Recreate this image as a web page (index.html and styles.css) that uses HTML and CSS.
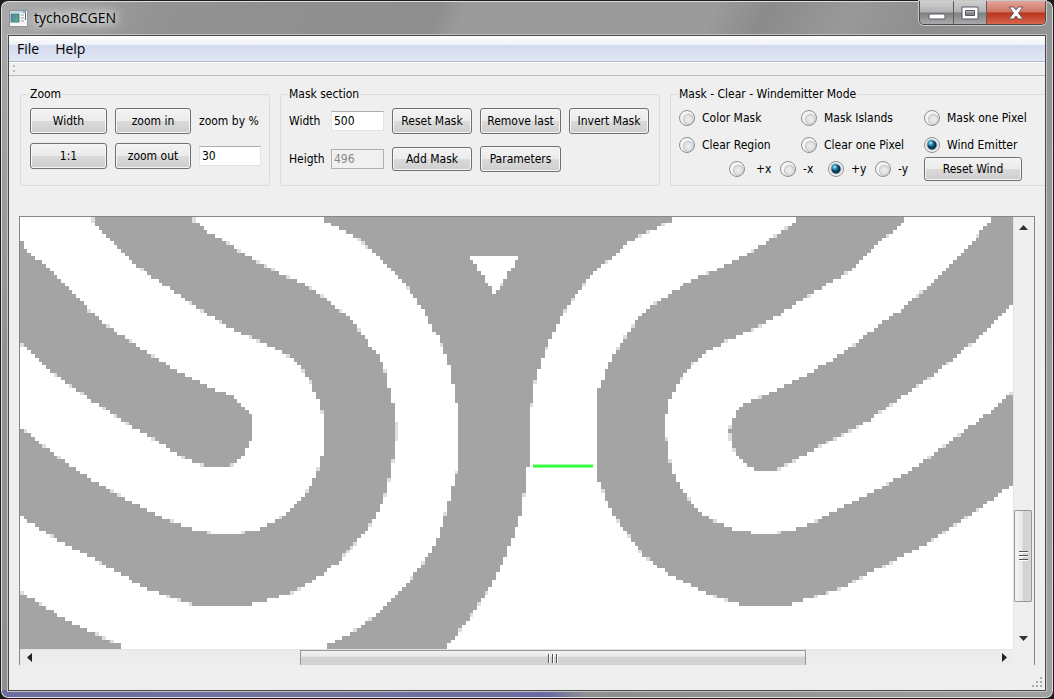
FILE: index.html
```html
<!DOCTYPE html>
<html lang="en">
<head>
<meta charset="utf-8">
<title>tychoBCGEN</title>
<link rel="stylesheet" href="styles.css">
</head>
<body>
<div class="window">
  <header class="titlebar">
    <svg class="app-icon" width="19" height="17" viewBox="0 0 19 17" aria-hidden="true">
      <defs><linearGradient id="scr" x1="0" y1="0" x2="1" y2="1"><stop offset="0" stop-color="#4f7fa6"/><stop offset="1" stop-color="#5fb37e"/></linearGradient></defs>
      <rect x="0.5" y="0.5" width="18" height="16" fill="#f6f8f8" stroke="#8b9696"/>
      <rect x="1" y="1" width="13" height="2" fill="#c6d6e2"/>
      <rect x="2" y="4" width="8" height="8" fill="url(#scr)" stroke="#4b7f87" stroke-width="1"/>
      <path d="M12 5h3M12 8h3M12 11h3" stroke="#c4caca" stroke-width="2"/>
      <path d="M16.500 2v8" stroke="#52666b"/>
      <rect x="14" y="1" width="3" height="2" fill="#87a8bd"/>
    </svg>
    <h1 class="title">tychoBCGEN</h1>
    <div class="controls">
      <button class="control minimize" type="button" aria-label="Minimize"><svg width="18" height="7" viewBox="0 0 18 7"><rect x="1" y="1" width="16" height="5" rx="1" fill="#fff" stroke="#555a66"/></svg></button>
      <button class="control maximize" type="button" aria-label="Maximize"><svg width="18" height="14" viewBox="0 0 18 14"><path d="M1 1h16v12H1zM4.500 4.500v5h9v-5z" fill="#fff" fill-rule="evenodd" stroke="#555a66"/></svg></button>
      <button class="control close" type="button" aria-label="Close"><svg width="16" height="14" viewBox="0 0 16 14"><path d="M1 1h4.500L8 4l2.500-3H15l-4.500 6 4.500 6h-4.500L8 10l-2.500 3H1l4.500-6z" fill="#fff" stroke="#6b5557"/></svg></button>
    </div>
  </header>
  <main class="client">
    <nav class="menubar">
      <button class="menu" type="button">File</button>
      <button class="menu" type="button">Help</button>
    </nav>
    <div class="toolbar"><svg width="3" height="8" viewBox="0 0 3 8" aria-hidden="true"><path d="M0 1h2M0 6h2" stroke="#bbb" stroke-width="2"/></svg></div>
    <form class="panels">
      <fieldset class="group zoom">
        <legend>Zoom</legend>
        <div class="zoom-grid">
          <button class="btn" type="button">Width</button>
          <button class="btn" type="button">zoom in</button>
          <label class="nowrap" for="zoomby">zoom by %</label>
          <button class="btn" type="button">1:1</button>
          <button class="btn" type="button">zoom out</button>
          <input class="field" id="zoomby" type="text" value="30">
        </div>
      </fieldset>
      <fieldset class="group mask">
        <legend>Mask section</legend>
        <div class="mask-grid">
          <label for="mw">Width</label>
          <input class="field" id="mw" type="text" value="500">
          <button class="btn" type="button">Reset Mask</button>
          <button class="btn" type="button">Remove last</button>
          <button class="btn" type="button">Invert Mask</button>
          <label for="mh">Heigth</label>
          <input class="field" id="mh" type="text" value="496" disabled>
          <button class="btn low" type="button">Add Mask</button>
          <button class="btn" type="button">Parameters</button>
        </div>
      </fieldset>
      <fieldset class="group mode">
        <legend>Mask - Clear - Windemitter Mode</legend>
        <div class="mode-grid">
          <label class="choice"><input type="radio" name="mode">Color Mask</label>
          <label class="choice"><input type="radio" name="mode">Mask Islands</label>
          <label class="choice"><input type="radio" name="mode">Mask one Pixel</label>
          <label class="choice"><input type="radio" name="mode">Clear Region</label>
          <label class="choice"><input type="radio" name="mode">Clear one Pixel</label>
          <label class="choice"><input type="radio" name="mode" checked>Wind Emitter</label>
          <div class="directions">
            <label class="choice wide"><input type="radio" name="dir">+x</label>
            <label class="choice"><input type="radio" name="dir">-x</label>
            <label class="choice"><input type="radio" name="dir" checked>+y</label>
            <label class="choice"><input type="radio" name="dir">-y</label>
          </div>
          <button class="btn low" type="button">Reset Wind</button>
        </div>
      </fieldset>
    </form>
    <section class="view">
      <div class="picture">
        <canvas class="mask-image" id="mask" width="265" height="116"></canvas>
        <svg class="overlay" viewBox="20 217 993 431" preserveAspectRatio="none" aria-hidden="true"><rect x="533" y="464" width="60" height="3" fill="#33ff40"/></svg>
      </div>
      <div class="vbar">
        <button class="arrow" type="button" aria-label="Scroll up"><svg width="9" height="5" viewBox="0 0 9 5"><path d="M0 5 4.500 0 9 5z" fill="#333"/></svg></button>
        <span class="gap before"></span>
        <span class="thumb"><svg width="9" height="10" viewBox="0 0 9 10"><path d="M0 .5h9M0 4.500h9M0 8.500h9" stroke="#555"/><path d="M0 1.500h9M0 5.500h9M0 9.500h9" stroke="#fff"/></svg></span>
        <span class="gap after"></span>
        <button class="arrow" type="button" aria-label="Scroll down"><svg width="9" height="5" viewBox="0 0 9 5"><path d="M0 0h9L4.500 5z" fill="#333"/></svg></button>
      </div>
      <div class="hbar">
        <button class="arrow" type="button" aria-label="Scroll left"><svg width="5" height="9" viewBox="0 0 5 9"><path d="M5 0v9L0 4.500z" fill="#222"/></svg></button>
        <span class="gap before"></span>
        <span class="thumb"><svg width="11" height="9" viewBox="0 0 11 9"><path d="M.5 0v9M4.500 0v9M8.500 0v9" stroke="#555"/><path d="M1.500 0v9M5.500 0v9M9.500 0v9" stroke="#fff"/></svg></span>
        <span class="gap after"></span>
        <button class="arrow" type="button" aria-label="Scroll right"><svg width="5" height="9" viewBox="0 0 5 9"><path d="M0 0v9L5 4.500z" fill="#222"/></svg></button>
      </div>
    </section>
    <footer class="status"><svg width="11" height="11" viewBox="0 0 11 11" aria-hidden="true"><path d="M8 1h2M8 5h2M4 5h2M0 9h2M4 9h2M8 9h2" stroke="#aaa" stroke-width="2"/></svg></footer>
  </main>
</div>
<script src="mask.js"></script>
</body>
</html>
```

FILE: styles.css
```css
* { box-sizing: border-box; }

body {
  margin: 0;
  background: #1c1c1c;
  color: #000;
  font: 12px/16px "DejaVu Sans Condensed", "Noto Sans", sans-serif;
}

button, input { font: inherit; color: inherit; }

.window {
  display: flex;
  flex-direction: column;
  height: 100vh;
  padding: 0 7px 7px;
  border: 1px solid #1c1c1c;
  border-radius: 8px;
  box-shadow: inset 0 0 0 1px #dedede;
  background:
    linear-gradient(90deg, #6c6ca0, #73739c 30%, #6a6aa0 52%, transparent 56%) bottom / 100% 8px no-repeat,
    linear-gradient(115deg, #aaa 0, #929292 12%, #8e8e8e 32%, #9b9b9b 34%, #9b9b9b 52%, #8b8b8b 56%, #999 62%, #8e8e8e 68%, #a0a0a0 100%);
}

.titlebar {
  display: flex;
  align-items: center;
  height: 34px;
  padding-left: 1px;
}

.title {
  flex: 1;
  margin: 0 0 0 6px;
  font: 14px/20px "Open Sans", sans-serif;
  text-shadow: 0 0 8px #fff, 0 0 12px #fff, 0 0 16px #ddd;
}

.controls {
  display: flex;
  align-self: flex-start;
  border: 1px solid #4a4a4a;
  border-top: 0;
  border-radius: 0 0 5px 5px;
  overflow: hidden;
  box-shadow: 0 0 0 1px #c8c8c8;
}

.control {
  display: grid;
  place-items: center;
  width: 34px;
  height: 23px;
  padding: 0;
  border: 0;
  border-right: 1px solid #5c5c5c;
  background: linear-gradient(#d0d0d0, #b2b2b2 48%, #7f7f7f 52%, #aaa);
}

.minimize { padding-top: 8px; }
.maximize { width: 33px; }

.close {
  width: 58px;
  border: 0;
  background: linear-gradient(#e3a397, #d07565 48%, #b8331c 52%, #d8664c);
}

.client {
  display: flex;
  flex: 1;
  flex-direction: column;
  min-height: 0;
  border: 1px solid #484848;
  background: #efefef;
  box-shadow: 0 0 0 1px #c4c4c4;
}

.menubar {
  display: flex;
  gap: 16px;
  height: 26px;
  padding-left: 8px;
  border-bottom: 1px solid #b4b8cc;
  background: linear-gradient(#fff, #eef2f8 34%, #d3daed 38%, #e2e7f6);
}

.menu {
  padding: 0;
  border: 0;
  background: none;
  font: 14px/24px "Open Sans", sans-serif;
}

.toolbar {
  display: flex;
  align-items: center;
  height: 14px;
  padding-left: 4px;
  border-top: 1px solid #fff;
  border-bottom: 1px solid #b9b9b9;
}

.panels {
  display: flex;
  gap: 10px;
  padding: 10px 0 0 11px;
}

.group {
  flex: none;
  height: 100px;
  min-width: 0;
  margin: 0;
  padding: 6px 9px 0;
  border: 1px solid #dcdcdc;
  border-radius: 3px;
}

.group legend { padding: 0 1px; margin-left: -1px; }
.zoom { width: 250px; }
.mask { width: 380px; padding-left: 8px; }

.mode {
  flex: 1;
  padding: 8px 0 0 8px;
  border-right: 0;
  border-radius: 3px 0 0 3px;
}

.zoom-grid {
  display: grid;
  grid-template-columns: 77px 76px 62px;
  gap: 9px 8px;
  align-items: center;
}

.mask-grid {
  display: grid;
  grid-template-columns: 34px 53px 80px 81px 80px;
  grid-auto-rows: 26px;
  gap: 12px 8px;
  align-items: center;
}

.nowrap { white-space: nowrap; }

.btn {
  height: 26px;
  padding: 0;
  border: 1px solid #707070;
  border-radius: 3px;
  background: linear-gradient(#f3f3f3, #ebebeb 48%, #dadada 52%, #cecece);
  box-shadow: inset 0 0 0 1px #f6f6f6;
  white-space: nowrap;
}

.low { height: 24px; }

.field {
  width: 100%;
  height: 20px;
  padding: 0 2px;
  border: 1px solid #e1e3e8;
  border-top-color: #abadb3;
  background: #fff;
}

.field:disabled {
  border-color: #b0b0b0;
  background: #f0f0f0;
  color: #888;
}

.mode-grid {
  display: grid;
  grid-template-columns: 122px 123px 98px;
  grid-template-rows: 16px 16px 24px;
  row-gap: 11px;
}

.directions {
  display: grid;
  grid-column: span 2;
  grid-template-columns: 51px 48px 47px 48px;
  padding-left: 50px;
}

.directions, .mode-grid .btn { margin-top: -7px; align-self: start; height: 24px; }
.directions { align-items: center; }

.choice {
  display: flex;
  align-items: center;
  gap: 7px;
  white-space: nowrap;
}

.wide { gap: 11px; }

.choice input {
  appearance: none;
  flex: none;
  width: 16px;
  height: 16px;
  margin: 0;
  border: 1px solid #8e8f8f;
  border-radius: 50%;
  background: radial-gradient(circle at 60% 60%, #f0f0f0 0, #dedede 4px, #c4c7ca 5px, #f4f4f4 6px);
}

.choice input:checked {
  background: radial-gradient(circle at 40% 36%, #c4f0fa 0, #2f9ac2 2px, transparent 4px), radial-gradient(circle, #0d5f87 0, #0b3048 4px, #b8c2ca 5px, #f4f4f4 6px);
}

.view {
  display: grid;
  flex: 1;
  grid-template-columns: 1fr 21px;
  grid-template-rows: 1fr 16px;
  min-height: 0;
  margin: 30px 10px 0;
  border: 1px solid #828790;
  border-bottom: 0;
}

.picture {
  position: relative;
  min-height: 0;
  overflow: hidden;
  background: #fff;
}

.mask-image, .overlay {
  position: absolute;
  inset: 0;
  display: block;
  width: 100%;
  height: 100%;
}

.mask-image {
  top: -2px;
  height: calc(100% + 4px);
  image-rendering: pixelated;
}

.vbar, .hbar { display: flex; }

.vbar {
  flex-direction: column;
  padding: 0 2px 0 0;
  border-left: 1px solid #e4e4e4;
}

.hbar { border-top: 1px solid #e4e4e4; background: #ececec; }

.arrow {
  display: grid;
  flex: 0 0 18px;
  place-items: center;
  padding: 0;
  border: 0;
  background: none;
}

.vbar .arrow { padding-top: 2px; }
.vbar .arrow:last-child { padding: 0 0 2px; }

.vbar .before { flex: 276; }
.vbar .thumb { flex: 90; }
.vbar .after { flex: 29; }
.hbar .before { flex: 263; }
.hbar .thumb { flex: 505; }
.hbar .after { flex: 189; }

.thumb {
  display: grid;
  place-items: center;
  border: 1px solid #979797;
  border-radius: 1px;
  background: linear-gradient(#f3f3f3, #e8e8e8 38%, #d0d1d3 42%, #d3d3d3);
}

.hbar .thumb { border-bottom: 0; }
.vbar .thumb { background: linear-gradient(90deg, #f3f3f3, #e8e8e8 46%, #d0d1d3 50%, #d7d7d7); }

.status {
  display: flex;
  align-items: flex-end;
  justify-content: flex-end;
  height: 25px;
  padding: 2px;
}
```

FILE: mask.js
```js
// Outlines of the solid regions, in scene coordinates.
const origin = { x: 20, y: 215, w: 993, h: 435 };
const solids = [
  '20,237 28,252 50,270 80,300 92,313 125,338 167,365 200,383 233,398 245,408 251,417 252,434 247,447 240,457 231,464 218,467 200,463 177,453 157,440 120,418 92,400 53,372 20,342',
  '91,217 110,240 133,262 157,280 182,297 210,315 240,332 277,348 295,361 308,377 318,398 323,416 325,433 323,453 312,483 293,508 267,525 245,532 226,534 207,532 182,525 143,508 113,492 70,465 37,440 20,427 20,513 47,532 78,550 113,568 150,588 183,600 203,604 225,605 247,604 277,596 307,583 333,565 350,548 368,527 383,500 390,472 395,447 396,430 395,413 390,393 382,363 370,345 350,320 327,300 308,287 287,277 250,258 227,243 207,232 190,217',
  '315,217 350,233 365,245 383,260 400,278 422,307 432,327 442,343 450,367 456,397 459,413 459,460 453,487 445,517 437,540 427,557 407,583 387,605 365,623 350,633 323,648 444,648 465,623 483,597 497,573 508,547 517,523 522,507 526,473 530,450 530,413 533,393 537,372 545,350 553,332 568,305 593,273 610,258 627,243 647,232 677,217',
  '20,592 43,605 70,622 103,637 128,648 20,648',
  '802,217 787,228 767,242 743,257 720,268 698,278 680,287 667,297 647,310 630,330 613,357 603,380 597,403 597,467 603,490 613,512 627,532 643,553 663,568 682,580 700,589 719,597 745,604 766,605 787,604 810,597 840,587 880,567 913,550 953,525 987,502 1013,483 1013,392 990,412 963,432 933,454 900,477 867,495 833,512 807,525 783,532 765,534 747,532 720,523 698,509 678,483 670,463 666,440 665,425 667,407 675,387 687,370 700,356 720,343 743,333 780,313 820,288 847,272 870,250 890,233 908,217',
  '994,217 983,230 960,255 937,278 910,303 880,325 847,350 810,373 780,388 750,402 737,413 731,424 731,440 735,450 742,459 750,466 765,469 782,466 813,449 830,440 867,420 913,388 947,363 987,328 1013,303 1013,217'
];
const hole = '468,255 521,255 495,295';

const canvas = document.getElementById('mask');
const ctx = canvas.getContext('2d');

function toCells(points) {
  return points.split(' ').map(pair => {
    const [x, y] = pair.split(',').map(Number);
    return {
      x: (x - origin.x) * canvas.width / origin.w,
      y: (y - origin.y) * canvas.height / origin.h,
      corner: x === 20 || x === 1013 || y === 217 || y === 648
    };
  });
}

// Smooth closed curve through the points, with straight corners on the scene's edge.
function fillSmooth(points) {
  const p = toCells(points);
  const n = p.length;
  const slope = i => {
    if (p[i].corner) return { x: 0, y: 0 };
    const a = p[(i + n - 1) % n];
    const b = p[(i + 1) % n];
    return { x: (b.x - a.x) / 6, y: (b.y - a.y) / 6 };
  };
  ctx.beginPath();
  ctx.moveTo(p[0].x, p[0].y);
  for (let i = 0; i < n; i++) {
    const j = (i + 1) % n;
    const s = slope(i);
    const t = slope(j);
    ctx.bezierCurveTo(p[i].x + s.x, p[i].y + s.y, p[j].x - t.x, p[j].y - t.y, p[j].x, p[j].y);
  }
  ctx.fill();
}

ctx.fillStyle = '#fff';
ctx.fillRect(0, 0, canvas.width, canvas.height);
ctx.fillStyle = '#000';
solids.forEach(fillSmooth);
ctx.fillStyle = '#fff';
ctx.beginPath();
toCells(hole).forEach(q => ctx.lineTo(q.x, q.y));
ctx.fill();

// Repeat the first and last visible rows past the clipped edge.
ctx.drawImage(canvas, 0, 1, canvas.width, 1, 0, 0, canvas.width, 1);
ctx.drawImage(canvas, 0, canvas.height - 2, canvas.width, 1, 0, canvas.height - 1, canvas.width, 1);

// Reduce every cell to solid, light edge or empty.
const image = ctx.getImageData(0, 0, canvas.width, canvas.height);
for (let i = 0; i < image.data.length; i += 4) {
  const v = image.data[i];
  const shade = v < 150 ? 164 : v < 185 ? 222 : 255;
  image.data[i] = image.data[i + 1] = image.data[i + 2] = shade;
}
ctx.putImageData(image, 0, 0);
```
